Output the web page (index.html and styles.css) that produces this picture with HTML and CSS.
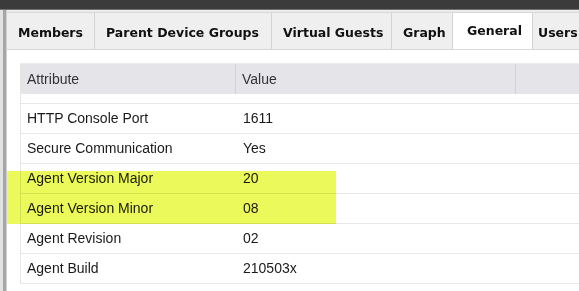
FILE: index.html
```html
<!DOCTYPE html>
<html>
<head>
<meta charset="utf-8">
<link rel="stylesheet" href="styles.css">
</head>
<body>
<div class="topbar"></div>
<div class="main">
  <div class="stripe"></div>
  <div class="panel">
    <div class="tabs">
      <div class="tab tab-members">Members</div>
      <div class="tab tab-parents">Parent Device Groups</div>
      <div class="tab tab-guests">Virtual Guests</div>
      <div class="tab tab-graph">Graph</div>
      <div class="tab tab-general active">General</div>
      <div class="tab tab-users">Users</div>
    </div>
    <div class="content">
      <div class="table">
        <div class="row head">
          <div class="cell">Attribute</div>
          <div class="cell">Value</div>
          <div class="cell"></div>
        </div>
        <div class="row spacer"></div>
        <div class="row"><div class="cell">HTTP Console Port</div><div class="cell">1611</div><div class="cell"></div></div>
        <div class="row"><div class="cell">Secure Communication</div><div class="cell">Yes</div><div class="cell"></div></div>
        <div class="row"><div class="cell">Agent Version Major</div><div class="cell">20</div><div class="cell"></div></div>
        <div class="row"><div class="cell">Agent Version Minor</div><div class="cell">08</div><div class="cell"></div></div>
        <div class="row"><div class="cell">Agent Revision</div><div class="cell">02</div><div class="cell"></div></div>
        <div class="row"><div class="cell">Agent Build</div><div class="cell">210503x</div><div class="cell"></div></div>
      </div>
    </div>
  </div>
</div>
<div class="highlight"></div>
</body>
</html>
```
FILE: styles.css
```css
html, body {
  margin: 0;
  padding: 0;
}
body {
  width: 579px;
  height: 291px;
  overflow: hidden;
  background: #ffffff;
  font-family: "Liberation Sans", Arial, sans-serif;
  position: relative;
}
.topbar {
  height: 9px;
  background: #3b3b3b;
  border-bottom: 1px solid #707070;
}
.main {
  display: flex;
  height: 281px;
}
.stripe {
  width: 7px;
  flex: none;
  background: linear-gradient(to right, #e2e2e2 0, #e2e2e2 3px, #a6a6a6 3px, #a6a6a6 6px, #d0d0d0 6px);
}
.panel {
  flex: 1;
  min-width: 0;
  display: flex;
  flex-direction: column;
}
.tabs {
  display: flex;
  white-space: nowrap;
  overflow: hidden;
  padding-top: 2px;
  background: #ececec;
  border-bottom: 1px solid #d8d8d8;
  height: 37px;
}
.tab {
  flex: none;
  box-sizing: border-box;
  height: 37px;
  padding: 3px 0 0 11px;
  line-height: 33px;
  font-family: "DejaVu Sans", Verdana, sans-serif;
  font-size: 12.5px;
  font-weight: bold;
  color: #111111;
  background: #efefef;
  border-top: 1px solid #d8d8d8;
  border-right: 1px solid #d4d4d4;
  overflow: hidden;
}
.tab-members { width: 88px; }
.tab-parents { width: 177px; }
.tab-guests { width: 120px; }
.tab-graph { width: 61px; }
.tab-general { width: 80px; padding-left: 14px; }
.tab-users { width: 80px; padding-left: 5px; }
.tab.active {
  background: #ffffff;
  padding-top: 1px;
  height: 38px;
  position: relative;
}
.content {
  flex: 1;
  padding: 13px 0 0 13px;
  overflow: hidden;
}
.table {
  width: 620px;
  border-left: 1px solid #e6e6e6;
}
.row {
  display: grid;
  grid-template-columns: 215px 280px 1fr;
  height: 29px;
  border-bottom: 1px solid #e8e8e8;
  font-size: 14px;
  color: #1a1a1a;
  line-height: 29px;
}
.row .cell {
  padding-left: 6px;
  white-space: nowrap;
}
.row .cell + .cell {
  padding-left: 7px;
}
.head {
  height: 30px;
  line-height: 30px;
  background: #e5e5e9;
  border-top: 1px solid #ececee;
  border-bottom: none;
  color: #333333;
}
.head .cell {
  border-right: 1px solid #d2d2d4;
}
.head .cell + .cell {
  padding-left: 6px;
}
.spacer {
  height: 9px;
}
.highlight {
  position: absolute;
  left: 7px;
  top: 171px;
  width: 329px;
  height: 53px;
  background: #ecf95a;
  mix-blend-mode: multiply;
}
```
